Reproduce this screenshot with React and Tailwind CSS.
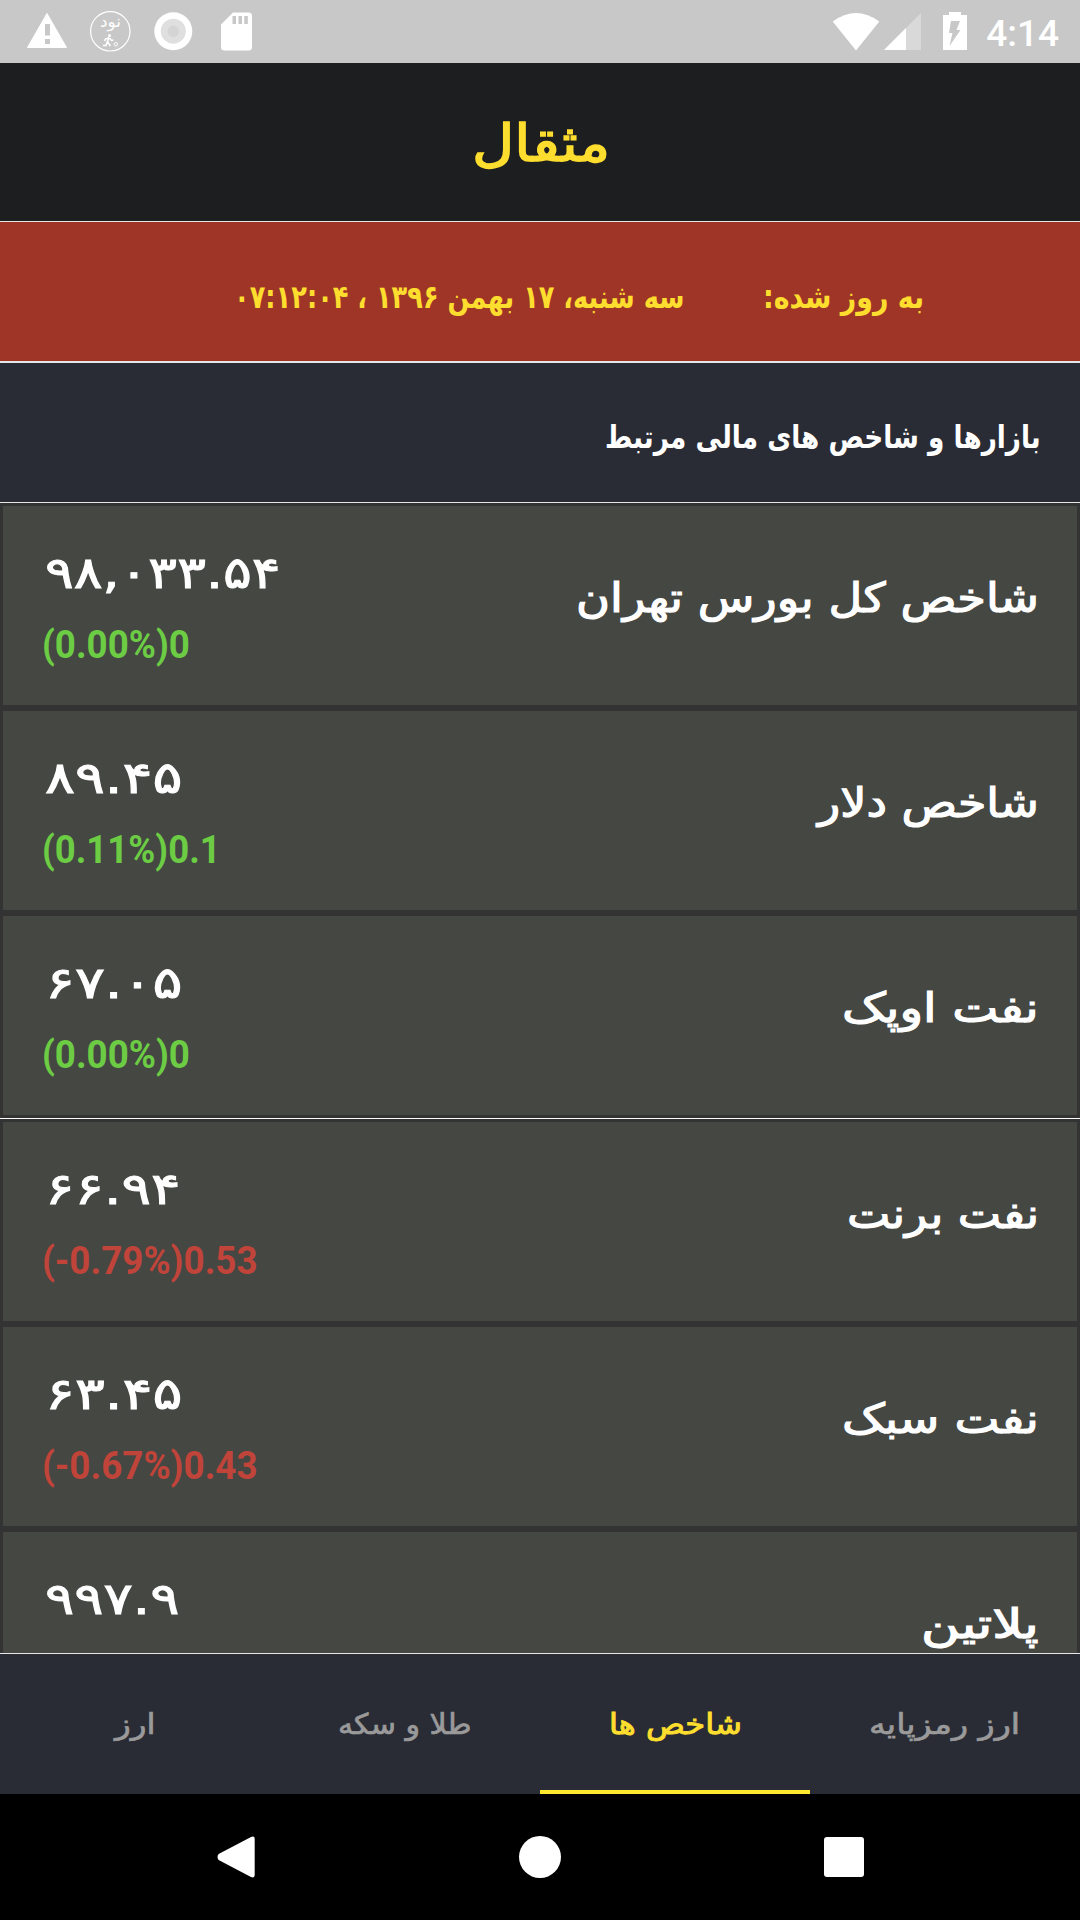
import { useLayoutEffect, useRef, useState } from "react";

const fa = "font-['DejaVu_Sans',sans-serif]";

// Text stretched horizontally so that its advance equals `width` pixels.
function Fit({ width, className = "", dir = "rtl", children }) {
  const ref = useRef(null);
  const [scale, setScale] = useState(1);
  useLayoutEffect(() => {
    setScale(width / ref.current.offsetWidth);
  }, [width, children]);
  return (
    <div className="flex shrink-0" dir={dir} style={{ width }}>
      <span
        ref={ref}
        className={`inline-block shrink-0 whitespace-nowrap ${dir === "rtl" ? "origin-right" : "origin-left"} ${className}`}
        style={{ transform: `scaleX(${scale})` }}
      >
        {children}
      </span>
    </div>
  );
}

const rows = [
  { name: "شاخص کل بورس تهران", nw: 463, price: "۹۸,۰۳۳.۵۴", pw: 235, change: "(0.00%)0", cw: 148, up: true },
  { name: "شاخص دلار", nw: 221, price: "۸۹.۴۵", pw: 138, change: "(0.11%)0.1", cw: 179, up: true },
  { name: "نفت اوپک", nw: 197, price: "۶۷.۰۵", pw: 138, change: "(0.00%)0", cw: 148, up: true },
  { name: "نفت برنت", nw: 192, price: "۶۶.۹۴", pw: 136, change: "(-0.79%)0.53", cw: 216, up: false, divider: true },
  { name: "نفت سبک", nw: 197, price: "۶۳.۴۵", pw: 138, change: "(-0.67%)0.43", cw: 216, up: false },
  { name: "پلاتین", nw: 118, price: "۹۹۷.۹", pw: 135, change: "", cw: 1, up: true },
];

const tabs = [
  { label: "ارز", w: 40 },
  { label: "طلا و سکه", w: 133 },
  { label: "شاخص ها", w: 133, active: true },
  { label: "ارز رمزپایه", w: 151 },
];

function StatusBar() {
  return (
    <div className="flex h-[63px] shrink-0 items-center justify-between bg-[#c8c8c8] text-white">
      <div className="flex">
        <svg width="260" height="63" fill="#fff">
          <path d="M47 13.500 66.500 47.500h-39z" stroke="#fff" strokeLinejoin="round" />
          <path d="M45 24h5v11.500h-5zM45 39h5v5h-5z" fill="#c8c8c8" />
          <circle cx="110.300" cy="31.300" r="19.700" fill="none" stroke="#fff" strokeWidth="1.200" />
          <text x="110.500" y="27" textAnchor="middle" fontSize="16" textLength="21" lengthAdjust="spacingAndGlyphs" className="font-['DejaVu_Sans',sans-serif]">نود</text>
          <circle cx="109.500" cy="35.500" r="1.500" />
          <path d="M109 37.500 107.500 42l3 4M107.500 41l-1.500 4.500h-3M109 38l-3.500 1-1 2M109.500 38l2 2.500 2-.5" fill="none" stroke="#fff" strokeWidth="1.500" />
          <circle cx="115.800" cy="44.300" r="1.700" fill="none" stroke="#fff" />
          <circle cx="173.300" cy="31.200" r="19" />
          <circle cx="173.300" cy="31.200" r="12.500" fill="#dfdfdf" />
          <circle cx="173.300" cy="31.200" r="5.600" fill="#d4d4d4" />
          <path d="M233 12.500h15.500a3.500 3.500 0 0 1 3.500 3.500v31a3.500 3.500 0 0 1-3.500 3.500h-24a3.500 3.500 0 0 1-3.500-3.500V24.500z" />
          <path d="M232.500 16h3.500v8h-3.500zM238.500 16h3.500v8h-3.500zM244.300 16h3.500v8h-3.500z" fill="#c8c8c8" />
        </svg>
      </div>
      <div className="flex items-center">
        <svg width="156" height="63" viewBox="830 0 156 63" fill="#fff">
          <path d="M832.700 21.500Q856 4.500 879.300 21.500L856 50.500z" />
          <path d="M921 13v37h-37z" fill="#d9d9d9" />
          <path d="M906 28v22h-22z" />
          <path d="M949 12h12v3h6v35h-24V15h6z" />
          <path d="M951 21h9l-3.500 9h4L949.500 46l3-13H949z" fill="#c8c8c8" />
        </svg>
        <span className="mr-[21px] mt-[4px] font-['Roboto',sans-serif] text-[37px] font-medium leading-none">4:14</span>
      </div>
    </div>
  );
}

function Row({ row }) {
  return (
    <>
      {row.divider && <div className="h-px shrink-0 bg-[#fafafa]" />}
      <div className="shrink-0 p-[3px]">
        <div className="flex h-[199px] justify-between bg-[#454743] pl-[39px] pr-[38px]">
          <div dir="ltr" className="flex flex-col">
            <div className="flex h-[106px] items-end pl-[3px]">
              <Fit width={row.pw} dir="ltr" className={`${fa} text-[44px] leading-[78px] text-white [-webkit-text-stroke:1px_#fff]`}>
                {row.price}
              </Fit>
            </div>
            <div className="flex h-[65px] items-center">
              <Fit width={row.cw} dir="ltr" className={`font-['Roboto',sans-serif] text-[38px] font-bold leading-[60px] ${row.up ? "text-[#6ccc44]" : "text-[#c0443a]"}`}>
                {row.change}
              </Fit>
            </div>
          </div>
          <div className="flex h-[184px] items-center">
            <Fit width={row.nw} className={`${fa} text-[41px] leading-[80px] text-white [-webkit-text-stroke:1.200px_#fff]`}>
              {row.name}
            </Fit>
          </div>
        </div>
      </div>
    </>
  );
}

export default function App() {
  return (
    <div className="flex h-[1920px] w-[1080px] flex-col overflow-hidden bg-black">
      <StatusBar />
      <header className="flex h-[159px] shrink-0 items-center justify-center border-b border-[#e6e6e6] bg-[#1d1e20] pl-[2px] pt-[4px]">
        <Fit width={138} className={`${fa} text-[51px] leading-[80px] text-[#fddd2e] [-webkit-text-stroke:1.500px_#fddd2e]`}>
          مثقال
        </Fit>
      </header>
      <div dir="rtl" className="flex h-[141px] shrink-0 items-center gap-[79px] border-b-2 border-[#e6e6e6] bg-[#9f3527] pr-[156px] pt-[11px]">
        <Fit width={161} className={`${fa} text-[32px] font-bold leading-[60px] text-[#fddd2e]`}>به روز شده:</Fit>
        <Fit width={450} className={`${fa} text-[32px] font-bold leading-[60px] text-[#fddd2e]`}>سه شنبه، ۱۷ بهمن ۱۳۹۶ ، ۰۷:۱۲:۰۴</Fit>
      </div>
      <div dir="rtl" className="flex h-[140px] shrink-0 items-center border-b border-[#e6e6e6] bg-[#2a2c35] pr-[39px] pt-[9px]">
        <Fit width={436} className={`${fa} text-[32px] font-bold leading-[60px] text-white`}>بازارها و شاخص های مالی مرتبط</Fit>
      </div>
      <main className="flex min-h-0 flex-1 flex-col overflow-hidden bg-[#333333]">
        {rows.map((row) => (
          <Row key={row.name} row={row} />
        ))}
      </main>
      <nav className="grid h-[141px] shrink-0 grid-cols-4 border-t border-[#e6e6e6] bg-[#2a2c35]">
        {tabs.map((tab) => (
          <div key={tab.label} className={`flex items-center justify-center border-b-4 pt-[5px] ${tab.active ? "border-[#ffe92f]" : "border-transparent"}`}>
            <Fit
              width={tab.w}
              className={`${fa} text-[28.500px] leading-[60px] ${tab.active ? "text-[#fddd2e] [-webkit-text-stroke:1px_#fddd2e]" : "text-[#9a9a9a] [-webkit-text-stroke:.7px_#9a9a9a]"}`}
            >
              {tab.label}
            </Fit>
          </div>
        ))}
      </nav>
      <footer className="flex h-[126px] shrink-0 items-center bg-black">
        <svg width="1080" height="126" fill="#fff">
          <path d="M218.600 60 251 43q3.700-1.600 3.700 2v36q0 3.600-3.700 2L218.600 66q-2.200-3 0-6z" />
          <circle cx="540" cy="63" r="21" />
          <rect x="824" y="43" width="40" height="40" rx="3" />
        </svg>
      </footer>
    </div>
  );
}
